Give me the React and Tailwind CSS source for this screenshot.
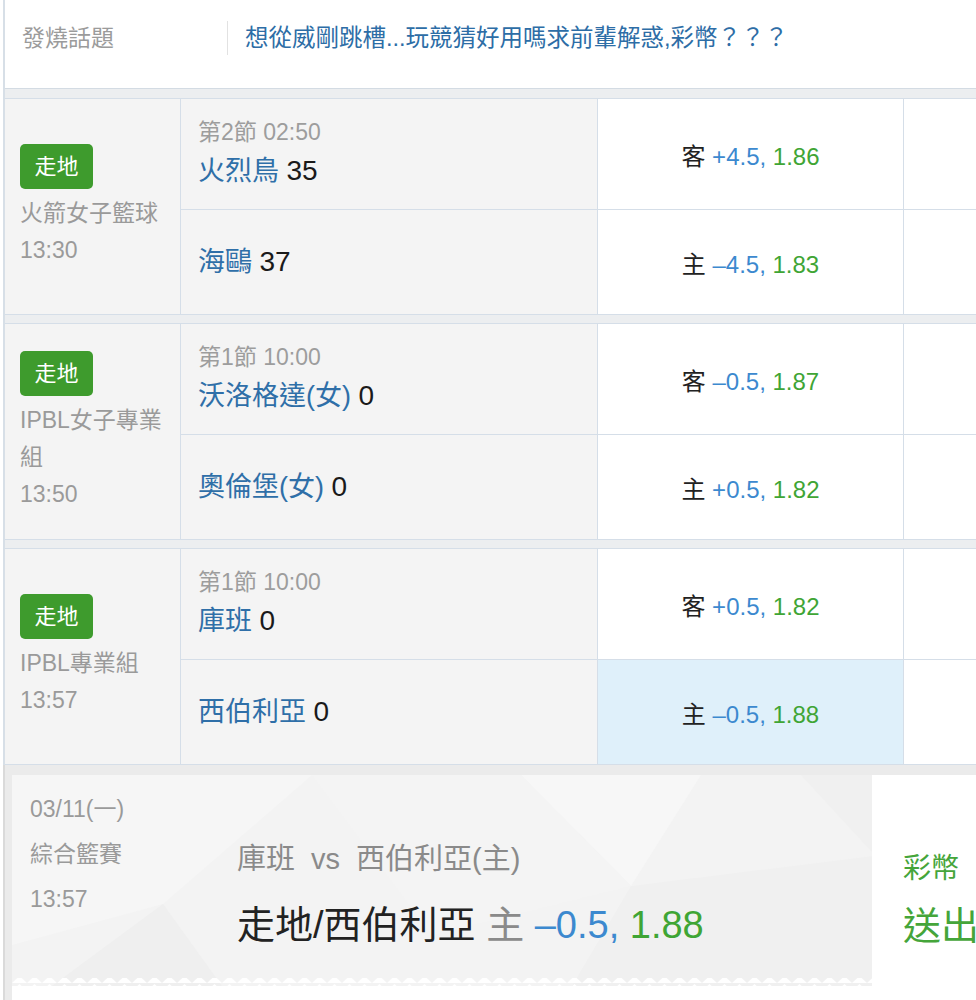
import React from "react";

const BORDER = "border-[#d5dee8]";

function Odds({ side, line, price }) {
  return (
    <span className="whitespace-nowrap">
      <span className="text-[#222]">{side}</span>{" "}
      <span className="text-[#3c89cf]">{line}</span>{" "}
      <span className="text-[#3fa535]">{price}</span>
    </span>
  );
}

function TeamCell({ period, team, score }) {
  return (
    <div className={`w-[417px] shrink-0 bg-[#f4f4f4] border-r ${BORDER} flex flex-col justify-center pl-[17px]`}>
      {period && <div className="text-[23px] leading-[34px] text-[#9d9d9d] whitespace-nowrap">{period}</div>}
      <div className="text-[27px] leading-[44px] whitespace-nowrap">
        <span className="text-[#2f6fa8]">{team}</span>{" "}
        <span className="text-[28px] text-[#1a1a1a]">{score}</span>
      </div>
    </div>
  );
}

function Match({ league, time, period, away, home, oddsAway, oddsHome, selected }) {
  return (
    <div className={`flex h-[217px] border-y ${BORDER}`}>
      <div className={`w-[176px] shrink-0 bg-[#f4f4f4] border-r ${BORDER} flex flex-col justify-center pl-[15px] pr-[8px]`}>
        <div className="w-[73px] h-[45px] rounded-[5px] bg-[#3e9b2d] text-white text-[22px] leading-[45px] text-center">走地</div>
        <div className="mt-[6px] text-[23px] leading-[37px] text-[#9a9a9a]">{league}</div>
        <div className="text-[23px] leading-[37px] text-[#9a9a9a]">{time}</div>
      </div>
      <div className="flex-1 flex flex-col">
        <div className={`h-[111px] flex border-b ${BORDER}`}>
          <TeamCell period={period} team={away.name} score={away.score} />
          <div className={`w-[306px] shrink-0 border-r ${BORDER} bg-white flex items-center justify-center text-[24px] leading-[30px] pt-[6px]`}>
            <Odds {...oddsAway} />
          </div>
          <div className="flex-1 bg-white" />
        </div>
        <div className="flex-1 flex">
          <TeamCell team={home.name} score={home.score} />
          <div className={`w-[306px] shrink-0 border-r ${BORDER} ${selected ? "bg-[#dff0fa]" : "bg-white"} flex items-center justify-center text-[24px] leading-[30px] pt-[6px]`}>
            <Odds {...oddsHome} />
          </div>
          <div className="flex-1 bg-white" />
        </div>
      </div>
    </div>
  );
}

function Band() {
  return <div className="h-[8px] bg-[#eceef0]" />;
}

export default function App() {
  return (
    <div className="w-[976px] h-[1000px] overflow-hidden bg-white font-['Liberation_Sans','Noto_Sans_CJK_TC',sans-serif]">
      <div className="ml-[3px] border-l-2 border-[#d7dfe7] bg-white">
        <div className="h-[89px] flex items-center border-b border-[#d3dbe3] pb-[12px]">
          <div className="w-[222px] shrink-0 pl-[17px] text-[23px] leading-[30px] text-[#9b9b9b]">發燒話題</div>
          <div className="w-px h-[34px] bg-[#e2e2e2]" />
          <div className="pl-[17px] text-[23.5px] leading-[30px] text-[#2d6da6] whitespace-nowrap">
            想從威剛跳槽...玩競猜好用嗎求前輩解惑,彩幣？？？
          </div>
        </div>
        <div className="h-[9px] bg-[#eceef0]" />
        <Match
          league="火箭女子籃球"
          time="13:30"
          period="第2節 02:50"
          away={{ name: "火烈鳥", score: "35" }}
          home={{ name: "海鷗", score: "37" }}
          oddsAway={{ side: "客", line: "+4.5,", price: "1.86" }}
          oddsHome={{ side: "主", line: "–4.5,", price: "1.83" }}
        />
        <Band />
        <Match
          league="IPBL女子專業組"
          time="13:50"
          period="第1節 10:00"
          away={{ name: "沃洛格達(女)", score: "0" }}
          home={{ name: "奧倫堡(女)", score: "0" }}
          oddsAway={{ side: "客", line: "–0.5,", price: "1.87" }}
          oddsHome={{ side: "主", line: "+0.5,", price: "1.82" }}
        />
        <Band />
        <Match
          league="IPBL專業組"
          time="13:57"
          period="第1節 10:00"
          away={{ name: "庫班", score: "0" }}
          home={{ name: "西伯利亞", score: "0" }}
          oddsAway={{ side: "客", line: "+0.5,", price: "1.82" }}
          oddsHome={{ side: "主", line: "–0.5,", price: "1.88" }}
          selected
        />
      </div>

      <div className="ml-[3px] border-l-2 border-[#dadada] bg-[#ebebeb] pl-[7px] pt-[10px] h-[240px]">
        <div className="flex bg-white h-full">
          <div className="relative w-[860px] shrink-0 h-[211px] bg-[#f3f3f3] overflow-hidden">
            <svg className="absolute inset-0" width="860" height="211" viewBox="0 0 860 211">
              <polygon points="0,0 300,0 151,129 0,170" fill="#f6f6f6" />
              <polygon points="151,129 40,211 210,211" fill="#efefef" />
              <polygon points="509,0 689,0 619,111" fill="#f7f7f7" />
              <polygon points="619,111 860,81 860,211 560,211" fill="#f0f0f0" />
              <polygon points="789,0 860,0 860,77" fill="#f0f0f0" />
              <polygon points="300,0 509,0 619,111 420,160" fill="#f4f4f4" />
              <defs>
                <pattern id="zz" width="15" height="8" patternUnits="userSpaceOnUse">
                  <polygon points="0,8 7.5,1 15,8" fill="#ffffff" />
                </pattern>
              </defs>
              <rect x="0" y="203" width="860" height="8" fill="url(#zz)" />
            </svg>
            <div className="relative flex">
              <div className="w-[225px] shrink-0 pl-[18px] pt-[12px] text-[23px] leading-[45px] text-[#9a9a9a]">
                <div>03/11(一)</div>
                <div>綜合籃賽</div>
                <div>13:57</div>
              </div>
              <div className="pt-[62px] whitespace-nowrap">
                <div className="text-[29px] leading-[44px] text-[#8a8a8a]">
                  庫班<span className="mx-[16px]">vs</span>西伯利亞(主)
                </div>
                <div className="mt-[18px] text-[38px] leading-[52px]">
                  <span className="text-[#222]">走地/西伯利亞</span>{" "}
                  <span className="text-[#8a8a8a]">主</span>{" "}
                  <span className="text-[#3c89cf]">–0.5,</span>{" "}
                  <span className="text-[#3fa535]">1.88</span>
                </div>
              </div>
            </div>
          </div>
          <div className="flex-1 pl-[31px] pt-[74px] whitespace-nowrap text-[#45a53a]">
            <div className="text-[28px] leading-[40px]">彩幣</div>
            <div className="mt-[12px] text-[38px] leading-[50px]">送出</div>
          </div>
        </div>
      </div>
    </div>
  );
}
